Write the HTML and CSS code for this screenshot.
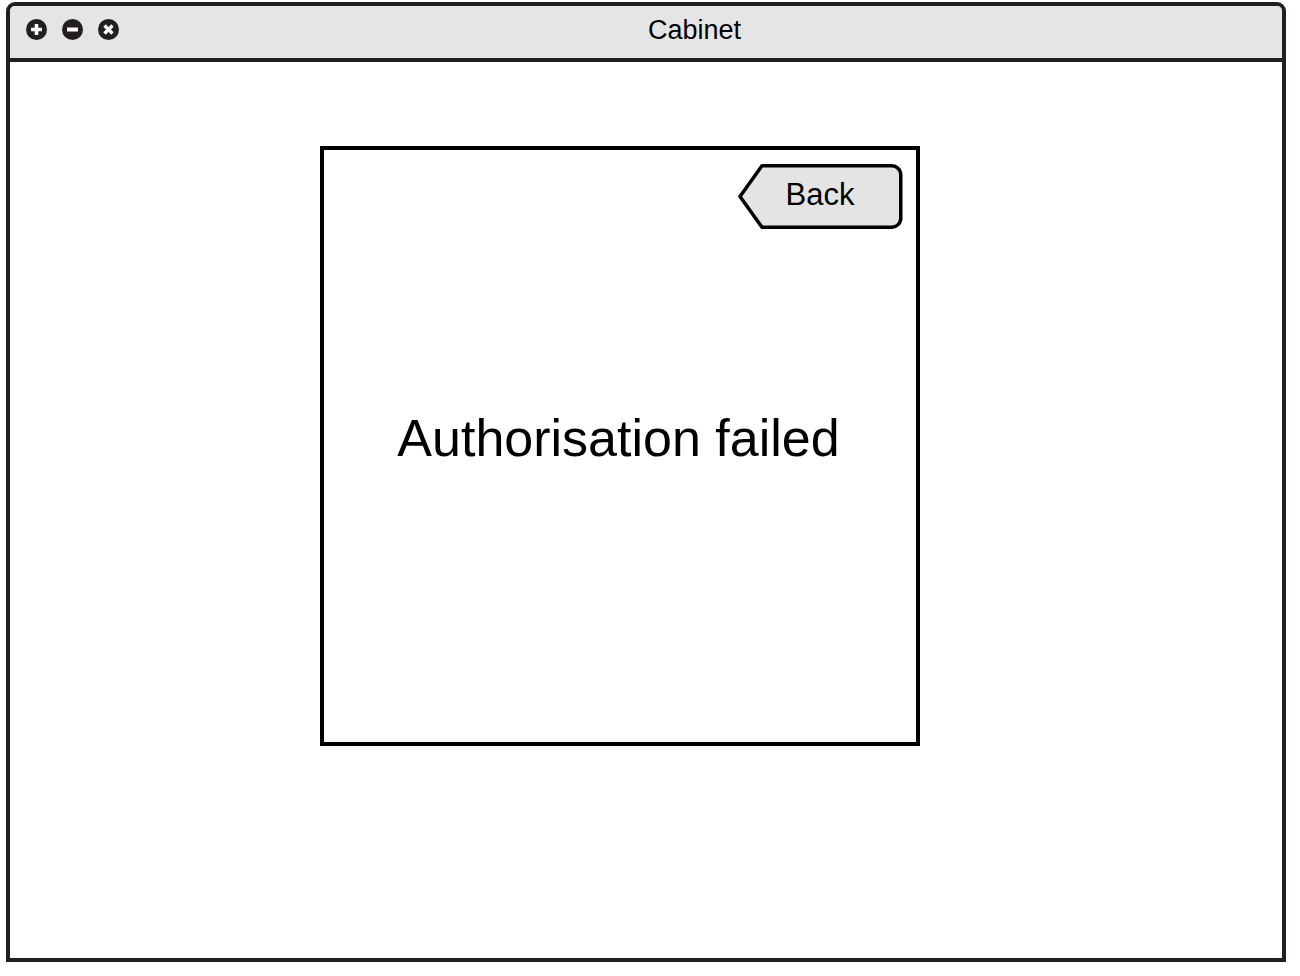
FILE: index.html
```html
<!DOCTYPE html>
<html>
<head>
<meta charset="utf-8">
<title>Cabinet</title>
<link rel="stylesheet" href="styles.css">
</head>
<body>
<div class="window">
  <div class="titlebar">
    <div class="controls">
      <svg class="ctl" width="21" height="21" viewBox="0 0 20 20"><circle cx="10" cy="10" r="10" fill="#231f20"/><path d="M10 4.8v10.4M4.8 10h10.4" stroke="#fff" stroke-width="3.4"/></svg>
      <svg class="ctl" width="21" height="21" viewBox="0 0 20 20"><circle cx="10" cy="10" r="10" fill="#231f20"/><path d="M4.8 10h10.4" stroke="#fff" stroke-width="3.8"/></svg>
      <svg class="ctl" width="21" height="21" viewBox="0 0 20 20"><circle cx="10" cy="10" r="10" fill="#231f20"/><path d="M6.2 6.2l7.6 7.6M13.8 6.2l-7.6 7.6" stroke="#fff" stroke-width="3.2"/></svg>
    </div>
    <div class="title">Cabinet</div>
  </div>
  <div class="content">
    <div class="panel">
      <div class="panel-head">
        <button class="back">
          <svg class="back-shape" width="165" height="65" viewBox="0 0 165 65"><path d="M24 1.75H153.5A9 9 0 0 1 162.75 10.5V54A9 9 0 0 1 153.5 63.25H24L2 32.5Z" fill="#e4e4e4" stroke="#000" stroke-width="3.5" stroke-linejoin="round"/></svg>
          <span class="back-label">Back</span>
        </button>
      </div>
      <div class="message">Authorisation failed</div>
    </div>
  </div>
</div>
</body>
</html>
```
FILE: styles.css
```css
html, body {
  margin: 0;
  padding: 0;
  background: #fff;
}
body {
  padding: 2px 0 0 6px;
  font-family: "Liberation Sans", Arial, sans-serif;
  color: #000;
}
.window {
  box-sizing: border-box;
  width: 1280px;
  height: 960px;
  border: 4px solid #231f20;
  border-radius: 9px 9px 0 0;
  display: flex;
  flex-direction: column;
  overflow: hidden;
}
.titlebar {
  flex: none;
  box-sizing: content-box;
  height: 47px;
  background: #e5e5e5;
  border-bottom: 4px solid #231f20;
  display: flex;
  align-items: center;
  padding: 0 0 5px 16px;
}
.controls {
  display: flex;
  gap: 15px;
}
.ctl {
  display: block;
}
.title {
  flex: 1;
  text-align: center;
  font-size: 27px;
  line-height: 30px;
  padding-right: 12px;
}
.content {
  flex: 1;
  padding: 84px 0 0 310px;
}
.panel {
  box-sizing: border-box;
  width: 600px;
  height: 600px;
  border: 4px solid #000;
  display: flex;
  flex-direction: column;
}
.panel-head {
  display: flex;
  justify-content: flex-end;
  padding: 13.5px 13.5px 0 0;
}
.back {
  position: relative;
  width: 165px;
  height: 65px;
  padding: 0;
  margin: 0;
  border: 0;
  background: transparent;
  display: flex;
  align-items: center;
  justify-content: center;
  font-family: inherit;
  cursor: pointer;
}
.back-shape {
  position: absolute;
  left: 0;
  top: 0;
}
.back-label {
  position: relative;
  font-size: 31px;
  line-height: 36px;
  color: #000;
  margin-top: -2px;
}
.message {
  margin-top: 183px;
  text-align: center;
  font-size: 52px;
  line-height: 1;
  padding-right: 3px;
}
```
